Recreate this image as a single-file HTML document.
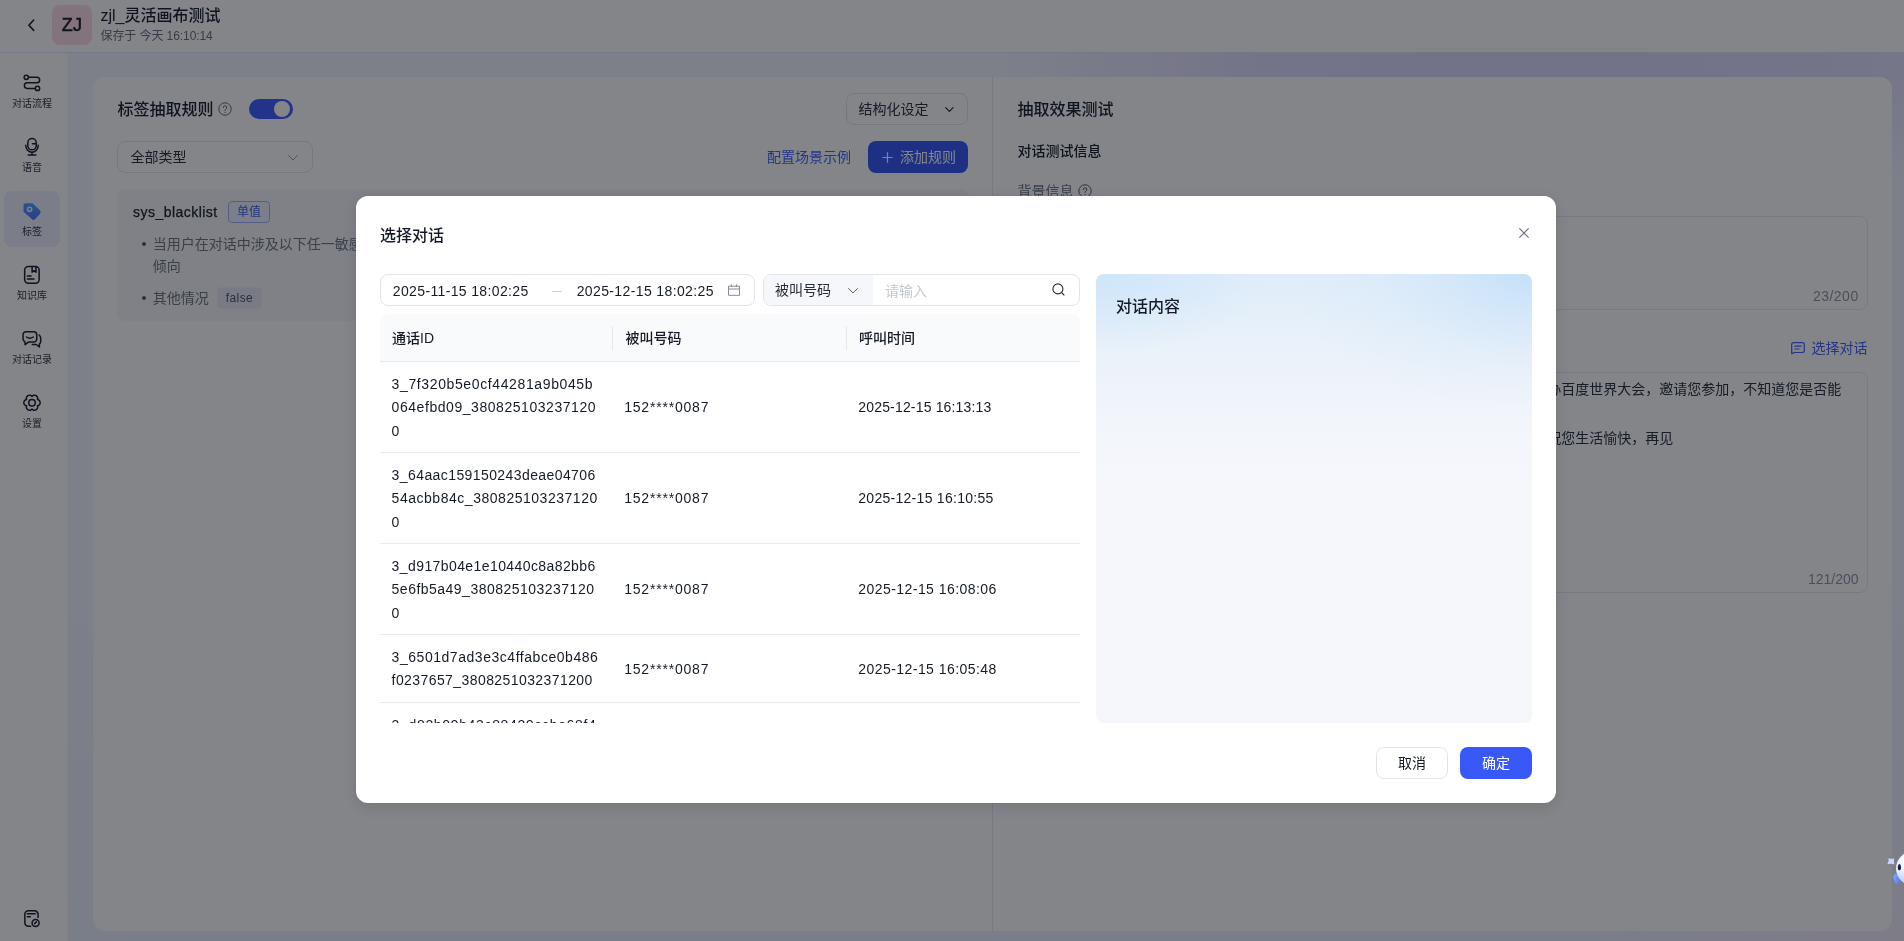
<!DOCTYPE html>
<html lang="zh-CN">
<head>
<meta charset="utf-8">
<title>zjl_灵活画布测试</title>
<style>
*{box-sizing:border-box;margin:0;padding:0}
html,body{width:1904px;height:941px;overflow:hidden;background:#fff}
body{font-family:"Liberation Sans","Noto Sans CJK SC",sans-serif;font-size:14px;color:#151b26;-webkit-font-smoothing:antialiased}
#app{position:relative;width:1904px;height:941px;overflow:hidden;background:#fff}
.hd,.sd,.mn,.md{will-change:transform}
.abs{position:absolute}
.t{position:absolute;white-space:nowrap;line-height:20px;height:20px}
svg{display:block;overflow:visible}

/* ---------- header ---------- */
.hd{position:absolute;left:0;top:0;width:1904px;height:53px;background:#fff;border-bottom:1px solid #e1e4fb}
.hd .back{position:absolute;left:26px;top:18px;width:10px;height:14px}
.hd .ava{position:absolute;left:52px;top:5px;width:40px;height:40px;border-radius:8px;background:#ffdbe7;color:#151b26;font-size:18px;font-weight:400;-webkit-text-stroke:.55px #151b26;line-height:40.5px;text-align:center;letter-spacing:.2px}
.hd .name{left:100.5px;top:6px;font-size:16px;font-weight:500;color:#151b26}
.hd .sub{left:100.5px;top:26px;font-size:12px;color:#676d79;letter-spacing:-.08px}

/* ---------- sidebar ---------- */
.sd{position:absolute;left:0;top:53px;width:69px;height:888px;background:#fff;border-right:1px solid #ebecef}
.sd .it{position:absolute;left:4px;width:56px;height:56px;border-radius:8px}
.sd .it.on{background:#eff1ff}
.sd .it svg{position:absolute;left:19px;top:11px;width:18px;height:18px}
.sd .it span{position:absolute;left:-10px;width:76px;top:34.2px;height:14px;line-height:14px;font-size:10px;text-align:center;color:#30353f}

/* ---------- main ---------- */
.mn{position:absolute;left:69px;top:53px;width:1835px;height:888px;background:
  radial-gradient(ellipse 300px 60px at 100% 100%,rgba(246,236,250,.9) 0%,rgba(243,240,254,0) 100%),
  linear-gradient(180deg,rgba(243,244,254,0) 0,rgba(243,244,254,0) 26px,#f3f4fe 130px,#f2f3fe 60%,#edf0fd 100%),
  linear-gradient(90deg,#f3f4fe 0%,#f3f4fe 50%,#e9e7fe 58%,#dedaff 67%,#dcd8ff 80%,#dedaff 92%,#e4e1ff 100%)}
.card{position:absolute;left:24px;top:24px;width:1799px;height:853.6px;border-radius:12px;background:#fff}
.vline{position:absolute;left:899px;top:0;width:1px;height:100%;background:#e6e8ee}
.h1{font-size:16px;font-weight:500;color:#151b26}
.help{position:absolute;width:14px;height:14px}
.sw{position:absolute;left:156px;top:22px;width:44px;height:20px;border-radius:10px;background:#3c5cff}
.sw i{position:absolute;right:2.8px;top:2px;width:16px;height:16px;border-radius:50%;background:#fff}
.box{position:absolute;border:1px solid #e3e5eb;border-radius:8px;background:#fff}
.lnk{color:#3f5fff}
.btnp{position:absolute;border-radius:8px;background:#3554f5;color:#fff}
.rule{position:absolute;left:24px;top:112px;width:851px;height:132px;border-radius:8px;background:#f6f7f9}
.tag1{position:absolute;left:111px;top:12px;width:42px;height:22px;border:1px solid #9fb3ff;border-radius:4px;background:#eef2ff;color:#3f62f0;font-size:12px;line-height:20px;text-align:center}
.tag2{position:absolute;left:100px;top:98px;width:45px;height:22px;border:1px solid #eceef4;border-radius:4px;background:#e8ebf5;color:#4a5263;font-size:12px;line-height:20px;text-align:center;letter-spacing:.4px}
.dot{position:absolute;width:4.8px;height:4.8px;border-radius:50%;background:#4e5563}
.g2{color:#6c727d}
.g3{color:#8d939e}
.ta{position:absolute;border:1px solid #e6e8ee;border-radius:8px;background:#fff}

/* ---------- mask + modal ---------- */
.mask{position:absolute;left:0;top:0;width:1904px;height:941px;background:rgba(7,12,20,.5)}
.md{position:absolute;left:356px;top:196px;width:1200px;height:607px;border-radius:12px;background:#fff;box-shadow:0 4px 14px rgba(7,12,20,.10),0 0 3px rgba(7,12,20,.06)}
.md .ttl{left:24px;top:30px;font-size:16px;font-weight:500;color:#151b26}
.md .x{position:absolute;left:1163px;top:32px;width:10px;height:10px}
.dp{position:absolute;left:24px;top:78px;width:375px;height:32px;border:1px solid #e2e4e9;border-radius:8px;background:#fff}
.grp{position:absolute;left:407px;top:78px;width:317px;height:32px;border:1px solid #e2e4e9;border-radius:8px;background:#fff;overflow:hidden}
.grp .sel{position:absolute;left:0;top:0;width:109px;height:30px;background:#f6f7fa}
.ph{color:#c3c7cf}
.tb{position:absolute;left:24px;top:118px;width:700px;height:409px;overflow:hidden}
.th{position:absolute;left:0;top:0;width:700px;height:48px;background:#f9fafc;border-radius:8px 8px 0 0;border-bottom:1px solid #e8eaee}
.th .t{top:14px;font-weight:500;color:#151b26}
.th i{position:absolute;top:12px;width:1px;height:24px;background:#e6e8ee}
.tr{position:absolute;left:0;width:700px;border-bottom:1px solid #e8eaee}
.tr .id{position:absolute;left:11.6px;top:10.6px;line-height:23.5px;white-space:nowrap;color:#151b26}
.tr .c2{left:244.2px}
.tr .c3{left:478.3px}
.pn{position:absolute;left:740px;top:78px;width:436px;height:449px;border-radius:8px;background:
  radial-gradient(ellipse 240px 140px at 100% 0%,rgba(196,224,250,.95) 0%,rgba(202,227,250,.6) 30%,rgba(208,230,250,.25) 62%,rgba(212,232,250,0) 100%),
  radial-gradient(ellipse 170px 80px at 0% 0%,rgba(206,229,250,.95) 0%,rgba(210,230,250,0) 100%),
  linear-gradient(180deg,#dfecfa 0%,#e7f0fa 12%,#eef3fa 24%,#f3f6fb 36%,#f5f7fb 48%,#f5f7fb 100%)}
.pn .t{left:20px;top:23px;font-size:16px;font-weight:500;color:#151b26}
.bt{position:absolute;top:551px;width:72px;height:32px;border-radius:8px;font-size:14px;line-height:30px;text-align:center}
.bt.c{left:1020px;border:1px solid #e2e4e9;background:#fff;color:#151b26}
.bt.o{left:1104px;background:#3858f8;color:#fff;line-height:32px}
</style>
</head>
<body>
<div id="app">

<!-- ================= header ================= -->
<div class="hd">
  <svg class="back" viewBox="0 0 10 14"><path d="M7.7 2 2.9 7.2l4.8 5.2" fill="none" stroke="#151b26" stroke-width="1.6" stroke-linecap="round" stroke-linejoin="round"/></svg>
  <div class="ava">ZJ</div>
  <div class="t name">zjl_灵活画布测试</div>
  <div class="t sub">保存于 今天 16:10:14</div>
</div>

<!-- ================= sidebar ================= -->
<div class="sd" id="sd">
  <div class="it" style="top:10px">
    <svg viewBox="0 0 18 18"><g stroke="#151b26" stroke-width="1.5" fill="none" stroke-linecap="round" stroke-linejoin="round"><circle cx="3.3" cy="3.3" r="2.15"/><circle cx="14.5" cy="14.4" r="2.15"/><path d="M5.5 3.3H13.9a2.75 2.75 0 0 1 0 5.5H4.2a2.8 2.8 0 0 0 0 5.6H12.3"/></g></svg>
    <span>对话流程</span>
  </div>
  <div class="it" style="top:74px">
    <svg viewBox="0 0 18 18"><g stroke="#151b26" stroke-width="1.5" fill="none" stroke-linecap="round" stroke-linejoin="round"><rect x="4.85" y=".55" width="8.4" height="11.3" rx="4.2"/><path d="M9.4 5.7H13.2M2.75 7.3a6.25 6.9 0 0 0 12.5 0M9 14.2V16.9M5.2 17.1H12.9"/></g></svg>
    <span>语音</span>
  </div>
  <div class="it on" style="top:138px">
    <svg viewBox="0 0 18 18"><defs><linearGradient id="tg" x1="0" y1="0" x2="0" y2="1"><stop offset="0" stop-color="#3ea4ff"/><stop offset="1" stop-color="#5868ff"/></linearGradient></defs><path d="M2.5 1.3H9a2 2 0 0 1 1.4.6L16.6 8.1a3 3 0 0 1 0 4.2L11.9 17.3a2 2 0 0 1-2.8 0L1.1 10.2A2 2 0 0 1 .5 8.8V3.3a2 2 0 0 1 2-2z" fill="url(#tg)"/><circle cx="6.6" cy="7.3" r="2.1" fill="none" stroke="#eef1ff" stroke-width="1.6"/></svg>
    <span>标签</span>
  </div>
  <div class="it" style="top:202px">
    <svg viewBox="0 0 18 18"><g stroke="#151b26" stroke-width="1.5" fill="none" stroke-linecap="round" stroke-linejoin="round"><rect x="1.65" y=".55" width="14.5" height="16.6" rx="3.6"/><path d="M9.1 .6V6.2l1.95-1.5 1.95 1.5V.6M4.4 9.9H8.1M4.4 13H11"/></g></svg>
    <span>知识库</span>
  </div>
  <div class="it" style="top:266px">
    <svg viewBox="0 0 18 18"><g stroke="#151b26" stroke-width="1.5" fill="none" stroke-linecap="round" stroke-linejoin="round"><path d="M3.05 1.65H10.75a3 3 0 0 1 3 3V9.05a3 3 0 0 1-3 3H5.5L2 14.6V11.8A3 3 0 0 1 .05 9.05V4.65a3 3 0 0 1 3-3zM3.5 7Q6.9 9.4 10.3 7M16.2 5A4.2 4.2 0 0 1 17.7 8.2V11.5a3 3 0 0 1-1.3 2.5V17L13.2 14.5H9.3"/></g></svg>
    <span>对话记录</span>
  </div>
  <div class="it" style="top:330px">
    <svg viewBox="0 0 18 18"><g stroke="#151b26" stroke-width="1.5" fill="none" stroke-linecap="round" stroke-linejoin="round"><path d="M17.1 8.7L17.1 9.4L16.8 10.1L16.5 10.7L15.9 11.2L15.3 11.6L14.4 11.8L14.7 12.7L14.7 13.4L14.5 14.2L14.1 14.8L13.6 15.3L13.1 15.8L12.4 16.0L11.7 16.2L11.0 16.2L10.3 16.0L9.6 15.6L9.0 15.0L8.4 15.6L7.7 16.0L7.0 16.2L6.3 16.2L5.6 16.0L4.9 15.8L4.4 15.3L3.9 14.8L3.5 14.2L3.3 13.4L3.3 12.7L3.6 11.8L2.7 11.6L2.1 11.2L1.5 10.7L1.2 10.1L0.9 9.4L0.8 8.7L0.9 8.0L1.2 7.3L1.5 6.7L2.1 6.2L2.7 5.8L3.6 5.6L3.3 4.7L3.3 4.0L3.5 3.2L3.9 2.6L4.4 2.1L4.9 1.6L5.6 1.4L6.3 1.2L7.0 1.2L7.7 1.4L8.4 1.8L9.0 2.4L9.6 1.8L10.3 1.4L11.0 1.2L11.7 1.2L12.4 1.4L13.1 1.6L13.6 2.1L14.1 2.6L14.5 3.2L14.7 4.0L14.7 4.7L14.4 5.6L15.3 5.8L15.9 6.2L16.5 6.7L16.8 7.3L17.1 8.0z"/><circle cx="9" cy="8.7" r="3.25"/></g></svg>
    <span>设置</span>
  </div>
  <div class="it" style="top:845px">
    <svg viewBox="0 0 18 18"><g stroke="#151b26" stroke-width="1.5" fill="none" stroke-linecap="round" stroke-linejoin="round"><path d="M15.05 8.6V5.35a3.5 3.5 0 0 0-3.5-3.5H5.35a3.5 3.5 0 0 0-3.5 3.5V13.85a3.5 3.5 0 0 0 3.5 3.5H7.7M4.3 4.7H12.2M4.3 7.7H7.3"/><circle cx="12.6" cy="13.9" r="3.5"/><path d="M11.6 14.6 13.4 12.9"/></g></svg>
  </div>
</div>

<!-- ================= main ================= -->
<div class="mn">
  <div class="card" id="card">
    <!-- left: rules -->
    <div class="t h1" style="left:24.5px;top:23px">标签抽取规则</div>
    <svg class="help" style="left:125px;top:25px" viewBox="0 0 14 14"><circle cx="7" cy="7" r="6.2" fill="none" stroke="#5c6370" stroke-width="1"/><path d="M5.2 5.6a1.8 1.8 0 1 1 2.6 1.6c-.5.3-.8.6-.8 1.2" fill="none" stroke="#5c6370" stroke-width="1" stroke-linecap="round"/><circle cx="7" cy="10.3" r=".65" fill="#5c6370"/></svg>
    <div class="sw"><i></i></div>
    <div class="box" style="left:753px;top:16px;width:122px;height:32px">
      <div class="t" style="left:11.5px;top:5px;color:#262c38">结构化设定</div>
      <svg class="abs" style="left:97.7px;top:12.7px;width:8.8px;height:5.3px" viewBox="0 0 10 6"><path d="M.8.8 5 5l4.2-4.2" fill="none" stroke="#1b212c" stroke-width="1.3" stroke-linecap="round" stroke-linejoin="round"/></svg>
    </div>
    <div class="box" style="left:24px;top:64px;width:196px;height:32px">
      <div class="t" style="left:12.5px;top:5px;color:#262c38">全部类型</div>
      <svg class="abs" style="left:170px;top:13px;width:10px;height:6px" viewBox="0 0 10 6"><path d="M.6.6 5 5l4.4-4.4" fill="none" stroke="#9298a5" stroke-width="1" stroke-linecap="round" stroke-linejoin="round"/></svg>
    </div>
    <div class="t lnk" style="left:674px;top:70px">配置场景示例</div>
    <div class="btnp" style="left:775px;top:64px;width:100px;height:32px">
      <svg class="abs" style="left:14px;top:10.5px;width:11px;height:11px" viewBox="0 0 11 11"><path d="M5.5 .3V10.7M.3 5.5H10.7" stroke="#fff" stroke-width="1.2" fill="none"/></svg>
      <div class="t" style="left:32px;top:6px;color:#fff">添加规则</div>
    </div>
    <div class="rule">
      <div class="t" style="left:16px;top:13px;font-weight:500;letter-spacing:.47px;-webkit-text-stroke:.25px #151b26">sys_blacklist</div>
      <div class="tag1">单值</div>
      <i class="dot" style="left:24.7px;top:52.5px"></i>
      <div class="t g2" style="left:35.8px;top:44.2px;line-height:22px">当用户在对话中涉及以下任一敏感内容时，将其标记为黑名单用户：辱骂、威胁、投诉</div>
      <div class="t g2" style="left:35.8px;top:65.8px;line-height:22px">倾向</div>
      <i class="dot" style="left:24.7px;top:106.5px"></i>
      <div class="t g2" style="left:35.8px;top:98.2px;line-height:22px">其他情况</div>
      <div class="tag2">false</div>
    </div>
    <div class="vline"></div>
    <!-- right: test -->
    <div class="t h1" style="left:924.5px;top:23px">抽取效果测试</div>
    <div class="t" style="left:924.5px;top:64px;font-weight:500">对话测试信息</div>
    <div class="t g2" style="left:924.5px;top:104.2px">背景信息</div>
    <svg class="help" style="left:985px;top:106.5px" viewBox="0 0 14 14"><circle cx="7" cy="7" r="6.2" fill="none" stroke="#4e5563" stroke-width="1"/><path d="M5.2 5.6a1.8 1.8 0 1 1 2.6 1.6c-.5.3-.8.6-.8 1.2" fill="none" stroke="#4e5563" stroke-width="1" stroke-linecap="round"/><circle cx="7" cy="10.3" r=".65" fill="#4e5563"/></svg>
    <div class="ta" style="left:924px;top:139px;width:851px;height:94px">
      <div class="t" style="left:12px;top:6px;line-height:24.5px">用户是百度智能云客悦的老客户，近期有参会意向</div>
      <div class="t g3" style="right:8.3px;top:68.5px;letter-spacing:.5px">23/200</div>
    </div>
    <div class="t g2" style="left:924.5px;top:261px">对话内容</div>
    <svg class="abs" style="left:1698px;top:265px;width:14px;height:13px" viewBox="0 0 14 13"><path d="M2.6.7H11.4a1.9 1.9 0 0 1 1.9 1.9V8.6a1.9 1.9 0 0 1-1.9 1.9H3.4L.7 11.7V2.6A1.9 1.9 0 0 1 2.6.7zM3.9 4.2H10.2M3.9 7H8" fill="none" stroke="#3f5fff" stroke-width="1.2" stroke-linecap="round" stroke-linejoin="round"/></svg>
    <div class="t lnk" style="left:1718.5px;top:261px">选择对话</div>
    <div class="ta" style="left:924px;top:295px;width:851px;height:221px">
      <div class="t" style="left:11.2px;top:3.8px;height:24.5px;line-height:24.5px;color:#262c38">机器人：您好，这里是百度智能云客悦团队，我们将于下个月在北京国家会议中心举<span id="l1">办百度世界大会</span>，邀请您参加，不知道您是否能</div>
      <div class="t" style="left:11.2px;top:28.3px;height:24.5px;line-height:24.5px;color:#262c38">抽出时间到场？</div>
      <div class="t" style="left:11.2px;top:52.8px;height:24.5px;line-height:24.5px;color:#262c38">用户：不好意思最近比较忙，就不去了，谢谢。机器人：好的，感谢您的耐心接听，<span id="l3">祝您生活愉快</span>，再见</div>
      <div class="t g3" style="right:8.4px;top:195.8px">121/200</div>
    </div>
  </div>
</div>

<div class="mask"></div>

<!-- ================= modal ================= -->
<div class="md" id="md">
  <div class="t ttl">选择对话</div>
  <svg class="x" viewBox="0 0 10 10"><path d="M.4.4 9.6 9.6M9.6.4.4 9.6" stroke="#666c78" stroke-width="1.15" fill="none"/></svg>
  <div class="dp">
    <div class="t" style="left:11.8px;top:5.75px"><span id="d1" style="letter-spacing:.36px">2025-11-15 18:02:25</span></div>
    <i class="abs" style="left:171px;top:15.8px;width:9.8px;height:1.6px;background:#ccd0d7"></i>
    <div class="t" style="left:195.7px;top:5.75px"><span id="d2" style="letter-spacing:.375px">2025-12-15 18:02:25</span></div>
    <svg class="abs" style="left:347px;top:9px;width:12px;height:12px" viewBox="0 0 12 12"><path d="M.5 2.2H11.5V11.3H.5zM.5 5H11.5M3.4.4V3M8.6.4V3" fill="none" stroke="#848b99" stroke-width="1"/></svg>
  </div>
  <div class="grp">
    <div class="sel"></div>
    <div class="t" style="left:11px;top:5px;color:#262c38">被叫号码</div>
    <svg class="abs" style="left:84px;top:12.5px;width:10px;height:6px" viewBox="0 0 10 6"><path d="M.5.5 5 5l4.5-4.5" fill="none" stroke="#5f6672" stroke-width="1" stroke-linecap="round" stroke-linejoin="round"/></svg>
    <div class="t ph" style="left:121px;top:6px">请输入</div>
    <svg class="abs" style="left:287.6px;top:7.6px;width:13px;height:13px" viewBox="0 0 13 13"><circle cx="5.9" cy="5.9" r="5" fill="none" stroke="#262c38" stroke-width="1.1"/><path d="M9.6 9.6 12 12" stroke="#262c38" stroke-width="1.1" stroke-linecap="round"/></svg>
  </div>
  <div class="tb">
    <div class="th">
      <div class="t" style="left:12px">通话ID</div>
      <i style="left:232px"></i>
      <div class="t" style="left:245.5px">被叫号码</div>
      <i style="left:466px"></i>
      <div class="t" style="left:479px">呼叫时间</div>
    </div>
      <div class="tr" style="top:48px;height:91px">
        <div class="id"><span style="letter-spacing:0.62px">3_7f320b5e0cf44281a9b045b</span><br><span style="letter-spacing:0.55px">064efbd09_380825103237120</span><br><span>0</span></div>
        <div class="t c2" style="top:35.4px;letter-spacing:.8px">152****0087</div>
        <div class="t c3" style="top:35.4px;letter-spacing:0.167px">2025-12-15 16:13:13</div>
      </div>
      <div class="tr" style="top:139px;height:91px">
        <div class="id"><span style="letter-spacing:0.41px">3_64aac159150243deae04706</span><br><span style="letter-spacing:0.525px">54acbb84c_380825103237120</span><br><span>0</span></div>
        <div class="t c2" style="top:35.4px;letter-spacing:.8px">152****0087</div>
        <div class="t c3" style="top:35.4px;letter-spacing:0.278px">2025-12-15 16:10:55</div>
      </div>
      <div class="tr" style="top:230px;height:91px">
        <div class="id"><span style="letter-spacing:0.41px">3_d917b04e1e10440c8a82bb6</span><br><span style="letter-spacing:0.483px">5e6fb5a49_380825103237120</span><br><span>0</span></div>
        <div class="t c2" style="top:35.4px;letter-spacing:.8px">152****0087</div>
        <div class="t c3" style="top:35.4px;letter-spacing:0.444px">2025-12-15 16:08:06</div>
      </div>
      <div class="tr" style="top:321px;height:68px">
        <div class="id"><span style="letter-spacing:0.536px">3_6501d7ad3e3c4ffabce0b486</span><br><span style="letter-spacing:0.417px">f0237657_3808251032371200</span></div>
        <div class="t c2" style="top:23.9px;letter-spacing:.8px">152****0087</div>
        <div class="t c3" style="top:23.9px;letter-spacing:0.444px">2025-12-15 16:05:48</div>
      </div>
      <div class="tr" style="top:389px;height:91px">
        <div class="id"><span style="letter-spacing:0.66px">3_d82b09b43c88429ccbe68f4</span><br><span style="letter-spacing:0.5px">0e5a2b7c1_380825103237120</span><br><span>0</span></div>
        <div class="t c2" style="top:35.4px;letter-spacing:.8px">152****0087</div>
        <div class="t c3" style="top:35.4px;letter-spacing:0.3px">2025-12-15 16:03:21</div>
      </div>
  </div>
  <div class="pn"><div class="t">对话内容</div></div>
  <div class="bt c">取消</div>
  <div class="bt o">确定</div>
</div>

<!-- ================= assistant mascot ================= -->
<svg class="abs" style="left:1884px;top:848px;width:20px;height:40px" viewBox="1884 848 20 40">
  <defs>
    <radialGradient id="mh" cx="0.3" cy="0.25" r="0.9"><stop offset="0" stop-color="#ffffff"/><stop offset=".4" stop-color="#e6eeff"/><stop offset="1" stop-color="#a4b4ff"/></radialGradient>
    <linearGradient id="mhd" x1="0" y1="0" x2="1" y2="1"><stop offset="0" stop-color="#86acff"/><stop offset="1" stop-color="#4b78f6"/></linearGradient>
    <linearGradient id="me" x1="0" y1="0" x2="0" y2="1"><stop offset="0" stop-color="#2b4770"/><stop offset=".6" stop-color="#0a1526"/></linearGradient>
  </defs>
  <ellipse cx="1896.6" cy="878.9" rx="2.7" ry="5.1" transform="rotate(-16 1896.6 878.9)" fill="url(#mhd)"/>
  <circle cx="1913" cy="868.5" r="17" fill="url(#mh)"/>
  <ellipse cx="1899.4" cy="867.2" rx="1.55" ry="3.1" fill="url(#me)"/>
  <path d="M1888.6 857.9Q1891 859.6 1894.3 858.3Q1893.4 861.2 1894.4 864.4Q1891 863.2 1887.3 864.3Q1889.3 861.2 1888.6 857.9z" fill="#c9d6fb"/>
</svg>
</div>
</body>
</html>
